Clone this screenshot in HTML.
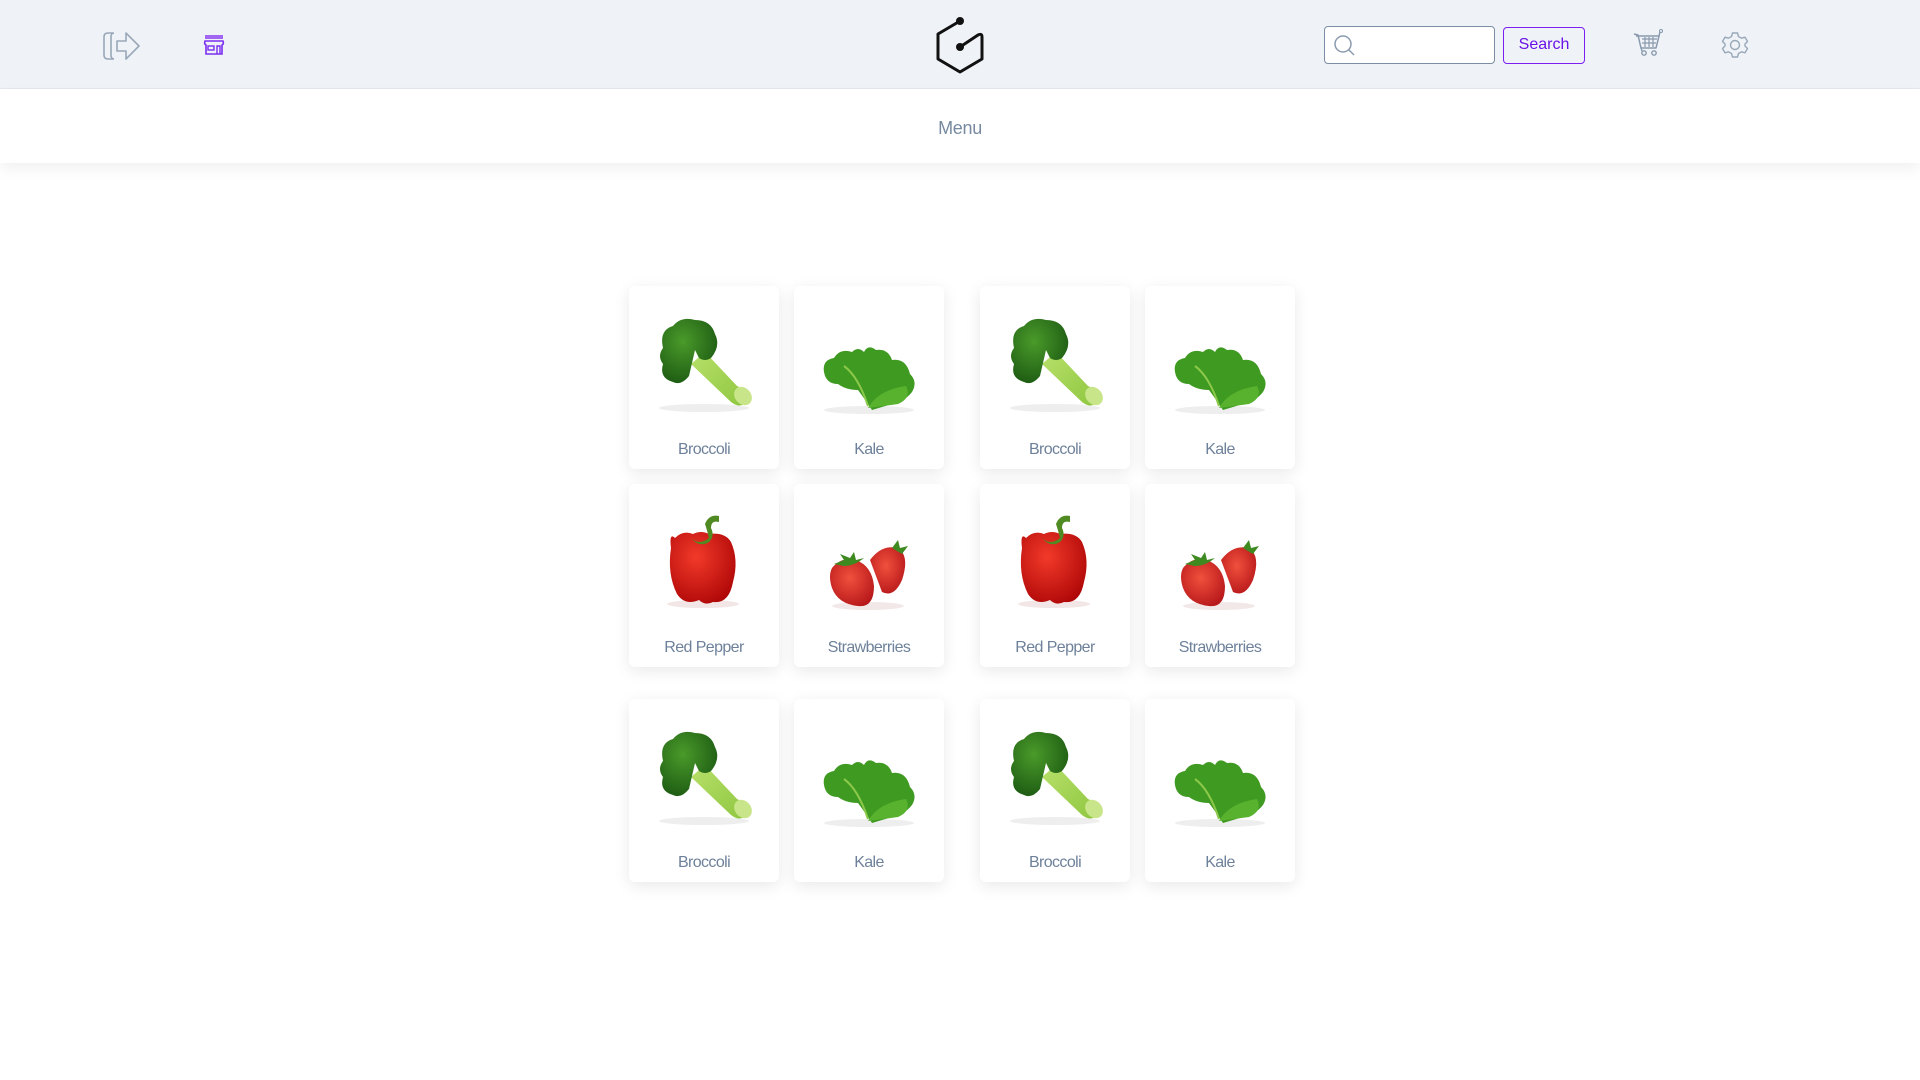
<!DOCTYPE html>
<html><head><meta charset="utf-8"><style>
*{margin:0;padding:0;box-sizing:border-box}
body{width:1920px;height:1080px;background:#fff;font-family:"Liberation Sans",sans-serif;position:relative;overflow:hidden}
.hdr{position:absolute;left:0;top:0;width:1920px;height:89px;background:#eff2f7;border-bottom:1px solid #e4e7ec}
.menu{position:absolute;left:0;top:90px;width:1920px;height:73px;background:#fff;box-shadow:0 6px 14px rgba(0,0,0,0.06);text-align:center;line-height:76px;font-size:18px;color:#778aa0;letter-spacing:-0.3px}
.card{position:absolute;width:150px;height:183px;background:#fff;border-radius:6px;box-shadow:0 4px 16px rgba(0,0,0,0.09)}
.card svg{position:absolute;left:0;top:0}
.card span{position:absolute;left:0;width:150px;top:155px;text-align:center;font-size:16px;color:#6e819a;letter-spacing:-0.6px}
.inp{position:absolute;left:1324px;top:26px;width:171px;height:38px;background:#fff;border:1px solid #7b8ea3;border-radius:4px}
.btn{position:absolute;left:1503px;top:27px;width:82px;height:37px;border:1.5px solid #7a1ff0;border-radius:4px;color:#6a12e8;font-size:16px;text-align:center;line-height:34px}
</style></head><body>
<svg width="0" height="0" style="position:absolute">
<defs>
<radialGradient id="gB" cx="40%" cy="35%" r="65%"><stop offset="0" stop-color="#4a9a2a"/><stop offset="1" stop-color="#1f5e14"/></radialGradient>
<linearGradient id="gS" x1="0" y1="0" x2="1" y2="1"><stop offset="0" stop-color="#b8e06a"/><stop offset="1" stop-color="#8dc63f"/></linearGradient>
<radialGradient id="gP" cx="40%" cy="35%" r="70%"><stop offset="0" stop-color="#f23a2a"/><stop offset="1" stop-color="#b00808"/></radialGradient>
<radialGradient id="gR" cx="45%" cy="40%" r="65%"><stop offset="0" stop-color="#f0503c"/><stop offset="1" stop-color="#b8181a"/></radialGradient>
<g id="broc">
<ellipse cx="75" cy="122" rx="45" ry="4" fill="#eee"/>
<path d="M62 78 L102 116 Q112 124 120 114 Q118 104 108 100 L76 66 Z" fill="url(#gS)"/>
<ellipse cx="114" cy="110" rx="8" ry="10" fill="#c8e58a" transform="rotate(-40 114 110)"/>
<path d="M34 62 Q30 44 44 40 Q52 30 66 34 Q82 34 86 48 Q92 60 82 72 Q76 76 70 72 L66 64 L60 90 Q52 100 44 96 Q30 92 34 78 Q28 70 34 62Z" fill="url(#gB)"/>
</g>
<g id="kale">
<ellipse cx="75" cy="124" rx="45" ry="4" fill="#eee"/>
<path d="M30 86 Q28 74 40 72 Q46 62 58 66 Q64 60 70 66 Q74 58 82 64 Q94 62 98 74 Q112 72 116 88 Q124 96 118 106 Q110 116 98 118 L78 124 Q70 112 64 104 Q52 104 44 98 Q32 98 30 86Z" fill="#3f9a22"/>
<path d="M74 122 Q84 104 112 100 Q118 112 104 118Z" fill="#58b22e"/>
<path d="M50 80 Q64 90 74 120" stroke="#8cc84a" stroke-width="2" fill="none"/>
</g>
<g id="pep">
<ellipse cx="74" cy="120" rx="36" ry="4" fill="#f2e6e6"/>
<path d="M46 54 Q40 48 42 64 Q38 90 48 110 Q56 122 70 116 Q76 122 84 118 Q100 120 104 98 Q110 76 102 58 Q96 48 80 50 Q72 46 64 50 Q54 46 46 54Z" fill="url(#gP)"/>
<path d="M62 54 Q70 62 80 54 Q78 46 76 40 Q80 30 90 32 L90 38 Q82 36 82 44 Q86 52 80 58 Q70 64 62 54Z" fill="#4f8a22"/>
</g>
<g id="str">
<ellipse cx="74" cy="122" rx="36" ry="4" fill="#f2e8e8"/>
<path d="M76 76 Q88 60 104 64 Q116 72 108 96 Q100 114 88 108 Z" fill="url(#gR)"/>
<path d="M38 84 Q48 72 62 76 Q78 82 80 102 Q80 124 64 122 Q44 120 38 104 Q34 92 38 84Z" fill="url(#gR)"/>
<path d="M40 80 L50 76 L46 70 L56 74 L60 68 L62 76 L70 74 Q60 82 50 82Z" fill="#3e8a20"/>
<path d="M98 64 L104 56 L106 64 L114 62 L108 70 Z" fill="#3e8a20"/>
</g>
</defs></svg>

<div class="hdr">
<svg width="40" height="30" style="position:absolute;left:102px;top:31px" viewBox="0 0 40 30"><path d="M12 2 H6 Q2 2 2 6 V24 Q2 28 6 28 H12 M12 2 Q9 2 9 6 V24 Q9 28 12 28 M15 10 H24 V2 L37 15 L24 28 V20 H15 Z" fill="none" stroke="#98a8b8" stroke-width="1.6" stroke-linejoin="round"/></svg>
<svg width="22" height="22" style="position:absolute;left:203px;top:34px" viewBox="0 0 22 22"><rect x="2" y="1" width="18" height="4" fill="#a166f2"/><path d="M2 7 Q1 10 3 11 V20 H19 V11 Q21 10 20 7 Z" fill="none" stroke="#7a2ef0" stroke-width="1.6"/><rect x="5" y="12" width="6" height="4" fill="none" stroke="#7a2ef0" stroke-width="1.4"/><path d="M14 20 V12 H17 V20" fill="none" stroke="#7a2ef0" stroke-width="1.4"/></svg>
<svg width="60" height="60" style="position:absolute;left:930px;top:15px" viewBox="930 15 60 60"><path d="M960 21 L938 34 V59 L960 72 L982 59 V37 Q982 33 978 35 L960 47" fill="none" stroke="#111" stroke-width="3" stroke-linejoin="round"/><circle cx="960" cy="21" r="4" fill="#111"/><circle cx="960" cy="47" r="4" fill="#111"/></svg>
<div class="inp"><svg width="24" height="24" style="position:absolute;left:8px;top:7px" viewBox="0 0 24 24"><circle cx="10" cy="10" r="8" fill="none" stroke="#8a9bb0" stroke-width="1.5"/><path d="M16 16 L21 21" stroke="#8a9bb0" stroke-width="1.5"/></svg></div>
<div class="btn">Search</div>
<svg width="32" height="32" style="position:absolute;left:1632px;top:28px" viewBox="0 0 32 32"><path d="M2 6 L6 7 L9 20 H24 L27 8 L4 8" fill="none" stroke="#8899ad" stroke-width="1.5" stroke-linejoin="round"/><path d="M10 11 H25 M10 15 H24 M13 9 V19 M17 9 V19 M21 9 V19" stroke="#8899ad" stroke-width="1.2"/><path d="M27 8 L28 4" stroke="#8899ad" stroke-width="1.5"/><circle cx="29" cy="3" r="1.5" fill="none" stroke="#8899ad"/><circle cx="12" cy="25" r="2.2" fill="none" stroke="#8899ad" stroke-width="1.4"/><circle cx="22" cy="25" r="2.2" fill="none" stroke="#8899ad" stroke-width="1.4"/><path d="M9 20 L10 23" stroke="#8899ad" stroke-width="1.3"/></svg>
<svg width="28" height="28" style="position:absolute;left:1721px;top:31px" viewBox="0 0 28 28"><path d="M11.5 2 H16.5 L17.5 5.5 L20.5 7.2 L24 6.2 L26.5 10.5 L24 13 V15 L26.5 17.5 L24 21.8 L20.5 20.8 L17.5 22.5 L16.5 26 H11.5 L10.5 22.5 L7.5 20.8 L4 21.8 L1.5 17.5 L4 15 V13 L1.5 10.5 L4 6.2 L7.5 7.2 L10.5 5.5 Z" fill="none" stroke="#98a8b8" stroke-width="1.4" stroke-linejoin="round"/><circle cx="14" cy="14" r="4.5" fill="none" stroke="#98a8b8" stroke-width="1.4"/></svg>
</div>
<div class="menu">Menu</div>

<div class="card" style="left:629px;top:286px"><svg width="150" height="183"><use href="#broc"/></svg><span>Broccoli</span></div>
<div class="card" style="left:794px;top:286px"><svg width="150" height="183"><use href="#kale"/></svg><span>Kale</span></div>
<div class="card" style="left:980px;top:286px"><svg width="150" height="183"><use href="#broc"/></svg><span>Broccoli</span></div>
<div class="card" style="left:1145px;top:286px"><svg width="150" height="183"><use href="#kale"/></svg><span>Kale</span></div>

<div class="card" style="left:629px;top:484px"><svg width="150" height="183"><use href="#pep"/></svg><span>Red Pepper</span></div>
<div class="card" style="left:794px;top:484px"><svg width="150" height="183"><use href="#str"/></svg><span>Strawberries</span></div>
<div class="card" style="left:980px;top:484px"><svg width="150" height="183"><use href="#pep"/></svg><span>Red Pepper</span></div>
<div class="card" style="left:1145px;top:484px"><svg width="150" height="183"><use href="#str"/></svg><span>Strawberries</span></div>

<div class="card" style="left:629px;top:699px"><svg width="150" height="183"><use href="#broc"/></svg><span>Broccoli</span></div>
<div class="card" style="left:794px;top:699px"><svg width="150" height="183"><use href="#kale"/></svg><span>Kale</span></div>
<div class="card" style="left:980px;top:699px"><svg width="150" height="183"><use href="#broc"/></svg><span>Broccoli</span></div>
<div class="card" style="left:1145px;top:699px"><svg width="150" height="183"><use href="#kale"/></svg><span>Kale</span></div>
</body></html>
